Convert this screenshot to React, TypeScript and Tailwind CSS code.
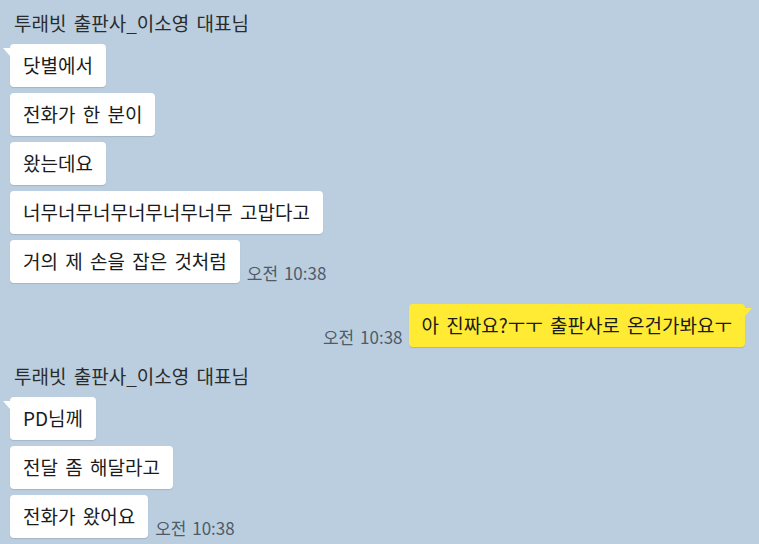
import React from 'react';

type Msg = { text: string; time?: string };

const firstGroup: Msg[] = [
  { text: '닷별에서' },
  { text: '전화가 한 분이' },
  { text: '왔는데요' },
  { text: '너무너무너무너무너무너무 고맙다고' },
  { text: '거의 제 손을 잡은 것처럼', time: '오전 10:38' },
];

const secondGroup: Msg[] = [
  { text: 'PD님께' },
  { text: '전달 좀 해달라고' },
  { text: '전화가 왔어요', time: '오전 10:38' },
];

function Time({ value }: { value: string }) {
  return <span className="text-[17px] leading-[20px] [word-spacing:2px] text-[#4f5b67] whitespace-nowrap">{value}</span>;
}

function Incoming({ msg, tail }: { msg: Msg; tail: boolean }) {
  return (
    <div className="flex items-end gap-[7px]">
      <div className="relative h-[43px] flex items-center px-[13px] bg-white rounded-[4px] shadow-[0_1px_1px_rgba(0,0,0,0.12)] text-[19px] [word-spacing:3px] text-[#1b1b1b] whitespace-nowrap">
        {tail && (
          <svg className="absolute left-[-7px] top-[4px]" width="7" height="8" viewBox="0 0 7 8">
            <polygon points="0,0 7,0 7,8" fill="#ffffff" />
          </svg>
        )}
        {msg.text}
      </div>
      {msg.time && <Time value={msg.time} />}
    </div>
  );
}

function Group({ name, messages, className }: { name: string; messages: Msg[]; className?: string }) {
  return (
    <div className={className}>
      <div className="pl-[14px] text-[19px] leading-[22px] [word-spacing:3px] text-[#2b2b2b]">{name}</div>
      <div className="flex flex-col gap-[6px] pl-[10px] mt-[10px]">
        {messages.map((m, i) => (
          <Incoming key={i} msg={m} tail={i === 0} />
        ))}
      </div>
    </div>
  );
}

export default function App() {
  return (
    <div className="w-[759px] h-[544px] overflow-hidden bg-[#bacee0] pt-[12px] font-['Malgun_Gothic','Noto_Sans_CJK_KR','Noto_Sans',sans-serif]">
      <Group name="투래빗 출판사_이소영 대표님" messages={firstGroup} />

      {/* my message */}
      <div className="flex items-end justify-end gap-[6px] pr-[14px] mt-[21px]">
        <Time value="오전 10:38" />
        <div className="relative h-[43px] flex items-center px-[13px] bg-[#ffeb33] rounded-[4px] shadow-[0_1px_1px_rgba(0,0,0,0.12)] text-[19px] [word-spacing:3px] text-[#1b1b1b] whitespace-nowrap">
          아 진짜요?ㅜㅜ 출판사로 온건가봐요ㅜ
          <svg className="absolute right-[-7px] top-[4px]" width="7" height="8" viewBox="0 0 7 8">
            <polygon points="0,0 7,0 0,8" fill="#ffeb33" />
          </svg>
        </div>
      </div>

      <Group name="투래빗 출판사_이소영 대표님" messages={secondGroup} className="mt-[18px]" />
    </div>
  );
}
